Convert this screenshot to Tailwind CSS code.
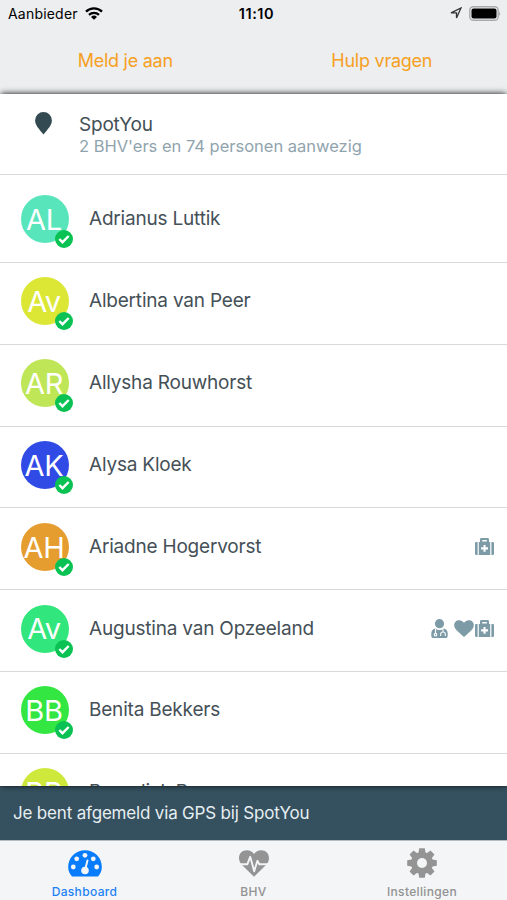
<!DOCTYPE html>
<html lang="nl">
<head>
<meta charset="utf-8">
<title>SpotYou</title>
<script src="https://cdn.jsdelivr.net/npm/@tailwindcss/browser@4"></script>
</head>
<body class="bg-white overflow-hidden">
<svg class="hidden">
  <symbol id="check" viewBox="0 0 18 18"><circle cx="9" cy="9" r="9" fill="#0ac253"/><path d="M4.300 9l3.200 3.200 6.200-6.200" fill="none" stroke="#fff" stroke-width="2.400"/></symbol>
  <symbol id="kit" viewBox="0 0 19 17"><path fill="#7d9ba7" fill-rule="evenodd" d="M0 5.200Q0 4 1.200 4H2.600V17H1.200Q0 17 0 15.800ZM16.400 4h1.400Q19 4 19 5.200v10.600Q19 17 17.800 17h-1.400ZM3.800 4H5V1.400Q5 0 6.400 0h6.200Q14 0 14 1.400V4h1.200v13H3.800ZM7.200 2V3.500h4.600V2ZM8.500 6.900v2.400H6.100v2.100h2.400v2.400h2.100v-2.400H13V9.300h-2.400V6.900Z"/></symbol>
</svg>
<div class="w-[507px] h-[900px] flex flex-col overflow-hidden font-[Inter,sans-serif] text-[#455057]">
  <header class="h-[94px] shrink-0 bg-[#eceef0]">
    <div class="h-7 px-2 grid grid-cols-3 items-center text-black">
      <div class="flex items-center gap-[7px] -mt-[2px]">
        <span class="text-[14px] tracking-[0.200px]">Aanbieder</span>
        <svg class="w-[18px] h-[13px]" viewBox="0 0 18 13"><g fill="none" stroke="#000" stroke-width="2.300"><path d="M1 4.600a11.500 11.500 0 0 1 16 0"/><path d="M4 7.900a7.200 7.200 0 0 1 10 0"/></g><path d="M9 12.800L6 10a4.300 4.300 0 0 1 6 0Z"/></svg>
      </div>
      <span class="text-center text-[14.500px] font-semibold tracking-[0.600px] pl-[6px] -mt-px">11:10</span>
      <div class="flex items-center justify-end gap-[7px] -mr-[2px] -mt-[2px]">
        <svg class="w-3 h-3" viewBox="0 0 12 12"><path d="M1 5.800L11 1 6.500 11V5.800Z" fill="none" stroke="#333" stroke-width="1.300"/></svg>
        <svg class="w-8 h-[15px]" viewBox="0 0 32 15"><rect x=".8" y=".8" width="28.400" height="13.400" rx="3.500" fill="#eceef0" stroke="#aaa" stroke-width="1.400"/><rect x="2.500" y="2.500" width="25" height="10" rx="2"/><path d="M30.300 5q1.700 2.500 0 5Z" fill="#999"/></svg>
      </div>
    </div>
    <nav class="h-16 grid grid-cols-2 items-center text-center text-[18px] tracking-[-0.250px] text-[#f7a023]">
      <a class="pr-[3px]">Meld je aan</a>
      <a class="pl-[3px]">Hulp vragen</a>
    </nav>
  </header>
  <main class="relative h-[692px] shrink-0 bg-white shadow-[0_-2px_6px_-1px_rgba(0,0,0,0.650),0_1px_5px_-1px_rgba(0,0,0,0.600)] z-10">
    <div class="h-full overflow-hidden">
      <section class="h-[81px] border-b-[1.500px] border-[#d6dadb] flex">
        <svg class="ml-[35px] mt-[18px] w-[17px] h-[23px]" viewBox="0 0 17 23"><path d="M8.500 0a8.400 8.400 0 0 1 8.400 8.500C16.900 13 13 17 8.500 22.600 4 17 .1 13 .1 8.500A8.400 8.400 0 0 1 8.500 0Z" fill="#344a52"/></svg>
        <div class="ml-[27px] pt-[19px]">
          <div class="text-[19px] leading-[23px] tracking-[-0.200px]">SpotYou</div>
          <div class="text-[16.500px] leading-[21px] tracking-[-0.010px] text-[#90a4ae]">2 BHV'ers en 74 personen aanwezig</div>
        </div>
      </section>
      <ul id="people" class="pt-[6px]"></ul>
    </div>
  </main>
  <div class="h-[54px] shrink-0 bg-[#35505e] flex items-center pl-[13px] pt-[2px] text-[17px] tracking-[-0.180px] text-[#e6eef2]">Je bent afgemeld via GPS bij SpotYou</div>
  <nav class="relative z-20 h-[60px] shrink-0 bg-[#f3f5f7] border-t border-[#b5bdc2] grid grid-cols-[169px_169px_169px] text-center text-[12px] leading-[15px] font-medium tracking-[0.350px] text-[#929292]">
    <a class="flex flex-col items-center pt-[9px] gap-[7px] text-[#1c82f4]">
      <svg class="w-[34px] h-[27px]" viewBox="0 0 34 27"><path d="M4 26.500Q.2 22.500 .2 17A16.800 16.800 0 0 1 33.800 17Q33.800 22.500 30 26.500Z" fill="#087cfb"/><g fill="#f3f5f7"><circle cx="5.300" cy="17" r="2.400"/><circle cx="8.700" cy="8.800" r="2.400"/><circle cx="17" cy="5.300" r="2.400"/><circle cx="25.300" cy="8.800" r="2.400"/><circle cx="28.700" cy="17" r="2.400"/><circle cx="17" cy="20.500" r="3.800"/></g><path d="M17 20l2.500-9.500" stroke="#f3f5f7" stroke-width="2" stroke-linecap="round"/></svg>
      Dashboard
    </a>
    <a class="flex flex-col items-center pt-[9px] gap-[7px]">
      <svg class="w-[30px] h-[27px]" viewBox="0 0 30 27"><path d="M15 4C17 1.500 19 .3 22 .3 27 .3 30 3.500 30 8.200 30 11.500 28 14 26 16L15 26.700 4 16C2 14 0 11.500 0 8.200 0 3.500 3 .3 8 .3 11 .3 13 1.500 15 4Z" fill="#949494"/><path d="M0 14.300h8.300l2.900-7.500 4 14.500 3.200-10.500 1.900 3.500H30" fill="none" stroke="#f3f5f7" stroke-width="1.900" stroke-linejoin="round"/></svg>
      BHV
    </a>
    <a class="flex flex-col items-center pt-[7px] gap-[6px] pr-px">
      <svg class="w-[30px] h-[30px]" viewBox="-15 -15 30 30"><g fill="#949494"><path d="M-3.700-9L-2.800-14.800H2.800L3.700-9V9L2.800 14.800H-2.800L-3.700 9Z"/><path transform="rotate(45)" d="M-3.700-9L-2.800-14.800H2.800L3.700-9V9L2.800 14.800H-2.800L-3.700 9Z"/><path transform="rotate(90)" d="M-3.700-9L-2.800-14.800H2.800L3.700-9V9L2.800 14.800H-2.800L-3.700 9Z"/><path transform="rotate(135)" d="M-3.700-9L-2.800-14.800H2.800L3.700-9V9L2.800 14.800H-2.800L-3.700 9Z"/><circle r="11"/></g><circle r="5" fill="#f3f5f7"/></svg>
      Instellingen
    </a>
  </nav>
</div>
<script>
const kit = '<svg class="w-[19px] h-[17px]"><use href="#kit"/></svg>';
const doctor = '<svg class="w-[17px] h-[19px] mr-[6px]" viewBox="0 0 17 19"><circle cx="8.500" cy="4.700" r="4.600" fill="#7d9ba7"/><path d="M4 9.500Q8.500 12.500 13 9.500 16.700 10.500 16.700 14.500V17Q16.700 19 15 19H2Q.3 19 .3 17V14.500Q.3 10.500 4 9.500Z" fill="#7d9ba7"/><g fill="none" stroke="#fff" stroke-width="1.100"><path d="M4.500 10v4.800M9.700 17v-2q0-2 2.300-2t2.300 2v2M12 13v-3"/><circle cx="4.500" cy="15.700" r="1.300"/></g></svg>';
const heart = '<svg class="w-[20px] h-[17px] mr-px" viewBox="0 0 20 17"><path d="M10 2.800C11.300 1 12.800.2 14.700.2 18 .2 19.800 2.300 19.800 5.300 19.800 7.500 18.500 9.200 17.200 10.400L10 17 2.800 10.400C1.500 9.200.2 7.500.2 5.300.2 2.300 2 .2 5.300.2 7.200.2 8.700 1 10 2.800Z" fill="#7d9ba7"/></svg>';
const people = [
  ['AL', 'Adrianus Luttik', 'bg-[#59e5bb]', ''],
  ['Av', 'Albertina van Peer', 'bg-[#dce735]', ''],
  ['AR', 'Allysha Rouwhorst', 'bg-[#bfe657]', ''],
  ['AK', 'Alysa Kloek', 'bg-[#304be5]', ''],
  ['AH', 'Ariadne Hogervorst', 'bg-[#e69d30]', kit],
  ['Av', 'Augustina van Opzeeland', 'bg-[#31e67c]', doctor + heart + kit],
  ['BB', 'Benita Bekkers', 'bg-[#33e641]', ''],
  ['BB', 'Benedick B', 'bg-[#cfe83c]', '']
];
document.getElementById('people').innerHTML = people.map(([initials, name, color, icons]) => `
  <li class="h-[81.850px] border-b-[1.500px] border-[#d6dadb] flex items-center pl-[21px] pr-[13px]">
    <div class="relative size-12 rounded-full ${color} text-white text-[29px] tracking-[-0.300px] flex items-center justify-center mt-[-4px]">
      <span class="pt-px pr-[2px] whitespace-nowrap">${initials}</span>
      <svg class="absolute left-[34px] top-[35px] size-[18px]"><use href="#check"/></svg>
    </div>
    <span class="ml-5 flex-1 text-[19px] tracking-[-0.200px] -mt-[3.500px]">${name}</span>
    <span class="flex items-center -mt-[5px]">${icons}</span>
  </li>`).join('');
</script>
</body>
</html>
